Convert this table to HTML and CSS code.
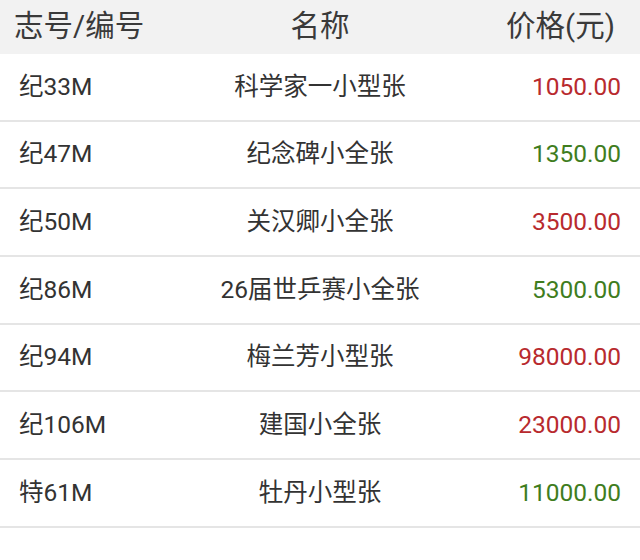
FILE: index.html
```html
<!DOCTYPE html>
<html lang="zh">
<head>
<meta charset="utf-8">
<link rel="stylesheet" href="styles.css">
</head>
<body>
<div class="table">
  <div class="row head">
    <div class="c1">志号/编号</div>
    <div class="c2">名称</div>
    <div class="c3">价格(元)</div>
  </div>
  <div class="row">
    <div class="c1">纪33M</div>
    <div class="c2">科学家一小型张</div>
    <div class="c3 red">1050.00</div>
  </div>
  <div class="row">
    <div class="c1">纪47M</div>
    <div class="c2">纪念碑小全张</div>
    <div class="c3 green">1350.00</div>
  </div>
  <div class="row">
    <div class="c1">纪50M</div>
    <div class="c2">关汉卿小全张</div>
    <div class="c3 red">3500.00</div>
  </div>
  <div class="row">
    <div class="c1">纪86M</div>
    <div class="c2">26届世乒赛小全张</div>
    <div class="c3 green">5300.00</div>
  </div>
  <div class="row">
    <div class="c1">纪94M</div>
    <div class="c2">梅兰芳小型张</div>
    <div class="c3 red">98000.00</div>
  </div>
  <div class="row">
    <div class="c1">纪106M</div>
    <div class="c2">建国小全张</div>
    <div class="c3 red">23000.00</div>
  </div>
  <div class="row">
    <div class="c1">特61M</div>
    <div class="c2">牡丹小型张</div>
    <div class="c3 green">11000.00</div>
  </div>
</div>
</body>
</html>
```
FILE: styles.css
```css
html, body {
  margin: 0;
  padding: 0;
  background: #ffffff;
}
body {
  font-family: Roboto, "Noto Sans CJK SC", sans-serif;
  color: #333333;
  width: 640px;
  height: 560px;
  overflow: hidden;
}
.table {
  display: flex;
  flex-direction: column;
}
.row {
  display: grid;
  grid-template-columns: 1fr 1fr 1fr;
  align-items: center;
  height: 65.7px;
  border-bottom: 2px solid #e5e5e5;
  font-size: 24.5px;
  line-height: 1;
}
.row.head {
  height: 54px;
  border-bottom: none;
  background: #f2f2f2;
  font-size: 29.5px;
  color: #3a3a3a;
}
.c1 {
  padding-left: 19px;
  white-space: nowrap;
}
.head .c1 {
  padding-left: 14px;
}
.c2 {
  text-align: center;
  white-space: nowrap;
}
.c3 {
  text-align: right;
  padding-right: 19px;
  white-space: nowrap;
}
.head .c3 {
  padding-right: 25px;
}
.red {
  color: #b82a2e;
}
.green {
  color: #3f7d1e;
}
```
